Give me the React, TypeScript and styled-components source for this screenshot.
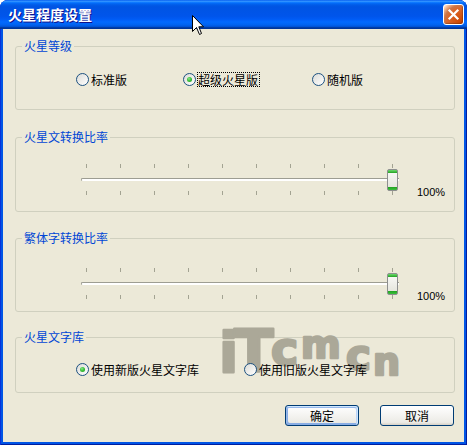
import React from "react";
import styled, { createGlobalStyle } from "styled-components";

const Global = createGlobalStyle`
  html, body { margin: 0; padding: 0; background: #ffffff; }
  body {
    font-family: "Noto Sans CJK SC", "Liberation Sans", sans-serif;
    font-size: 12px;
    color: #000;
  }
`;

const Window = styled.div`
  position: relative;
  width: 467px;
  height: 445px;
  display: flex;
  flex-direction: column;
  border-radius: 8px 8px 0 0;
  overflow: hidden;
  background: #0055e5;
  box-shadow: inset 1px 0 #0831d9, inset -1px 0 #001ea0, inset 0 -1px #001ea0;
`;

const TitleBar = styled.div`
  flex: none;
  height: 29px;
  box-sizing: border-box;
  display: flex;
  align-items: center;
  justify-content: space-between;
  padding: 0 3px 1px 8px;
  background: linear-gradient(
    180deg,
    #0058ee 0%,
    #3593ff 4%,
    #288eff 6%,
    #127dff 8%,
    #036ffc 10%,
    #0262ee 14%,
    #0057e5 20%,
    #0054e3 24%,
    #0055eb 56%,
    #005bf5 66%,
    #026afe 76%,
    #0062ef 86%,
    #0052d6 92%,
    #0040ab 94%,
    #003092 100%
  );
`;

const Title = styled.div`
  color: #fff;
  font-weight: bold;
  font-size: 14px;
  line-height: 16px;
  text-shadow: 1px 1px #0f1089;
`;

const CloseButton = styled.div`
  width: 21px;
  height: 21px;
  box-sizing: border-box;
  border: 1px solid #fff;
  border-radius: 3px;
  display: flex;
  align-items: center;
  justify-content: center;
  background: radial-gradient(
    circle at 90% 90%,
    #cc4600 0%,
    #dc6527 55%,
    #cd7546 70%,
    #ffccaa 90%,
    #ffffff 100%
  );
  box-shadow: inset -1px -1px 1px rgba(0, 0, 0, 0.25);
`;

const Body = styled.div`
  flex: 1;
  position: relative;
  display: flex;
  flex-direction: column;
  margin: 0 3px 3px;
  padding: 17px 9px 0 12px;
  background: #ece9d8;
`;

const Group = styled.div<{ $h: number; $pt: number; $mt: number }>`
  position: relative;
  box-sizing: border-box;
  height: ${(p) => p.$h}px;
  margin-top: ${(p) => p.$mt}px;
  padding-top: ${(p) => p.$pt}px;
  border: 1px solid #d0d0bf;
  border-radius: 3px;
`;

const Legend = styled.div`
  position: absolute;
  top: -9px;
  left: 6px;
  padding: 0 2px;
  line-height: 16px;
  color: #0046d5;
  background: #ece9d8;
`;

const RadioRow = styled.div<{ $cols: string }>`
  position: relative;
  z-index: 2;
  display: grid;
  grid-template-columns: ${(p) => p.$cols};
  align-items: center;
  padding-left: 60px;
`;

const RadioItem = styled.div`
  display: flex;
  align-items: center;
`;

const RadioCircle = styled.span<{ $checked?: boolean }>`
  position: relative;
  flex: none;
  width: 13px;
  height: 13px;
  box-sizing: border-box;
  border: 1px solid #1c5180;
  border-radius: 50%;
  background: linear-gradient(135deg, #dcdcd7 0%, #ffffff 100%);
  &::after {
    content: "";
    display: ${(p) => (p.$checked ? "block" : "none")};
    position: absolute;
    left: 3px;
    top: 3px;
    width: 5px;
    height: 5px;
    border-radius: 50%;
    background: radial-gradient(circle at 40% 35%, #8be88b 0%, #3cc23c 45%, #1a9a1a 100%);
  }
`;

const RadioLabel = styled.span<{ $focus?: boolean }>`
  line-height: 13px;
  margin-left: 1px;
  border: 1px dotted ${(p) => (p.$focus ? "#000" : "transparent")};
  padding: 0 1px 0 0;
  white-space: nowrap;
`;

const SliderRow = styled.div`
  display: flex;
  align-items: flex-end;
  padding-left: 65px;
`;

const SliderBox = styled.div`
  position: relative;
  width: 318px;
  display: flex;
  flex-direction: column;
`;

const TickRow = styled.div`
  display: flex;
  gap: 33px;
  height: 4px;
  padding-left: 5px;
`;

const Tick = styled.span`
  width: 1px;
  height: 4px;
  background: #a3a392;
`;

const Track = styled.div`
  height: 3px;
  margin: 10px 0;
  box-sizing: border-box;
  border-top: 1px solid #9d9d92;
  border-left: 1px solid #9d9d92;
  border-radius: 2px 0 0 2px;
  background: #ffffff;
`;

const Thumb = styled.div`
  position: absolute;
  top: 5px;
  width: 11px;
  height: 22px;
  box-sizing: border-box;
  border: 1px solid #8e8f8f;
  border-radius: 2px;
  background: linear-gradient(
    180deg,
    #6edb6e 0px,
    #21a121 3px,
    #f7f7f4 3px,
    #e6e6de calc(100% - 3px),
    #21a121 calc(100% - 3px),
    #3cc03c 100%
  );
`;

const Percent = styled.span`
  margin-left: 18px;
  margin-bottom: -3px;
  font-family: "Liberation Sans", "DejaVu Sans", sans-serif;
  font-size: 11px;
  line-height: 12px;
`;

const ButtonRow = styled.div`
  display: flex;
  justify-content: flex-end;
  gap: 21px;
  margin-top: 12px;
  padding-right: 1px;
`;

const Button = styled.button<{ $default?: boolean }>`
  width: 74px;
  height: 21px;
  box-sizing: border-box;
  padding: 0;
  border: 1px solid #003c74;
  border-radius: 3px;
  font-family: "Noto Sans CJK SC", sans-serif;
  font-size: 12px;
  line-height: 14px;
  color: #000;
  background: linear-gradient(180deg, #ffffff 0%, #ecebe6 86%, #d6d0c5 100%);
  box-shadow: ${(p) =>
    p.$default
      ? "inset -1px 1px #cee7ff, inset 1px 2px #98b8ea, inset -2px 2px #bcd4f6, inset 1px -1px #89ade4, inset 2px -2px #89ade4"
      : "none"};
`;

const Watermark = styled.svg`
  position: absolute;
  z-index: 1;
  left: 207px;
  top: 280px;
  overflow: visible;
  pointer-events: none;
`;

const Cursor = styled.svg`
  position: absolute;
  z-index: 5;
  left: 192px;
  top: 15px;
`;

function Radio({ label, checked, focus }: { label: string; checked?: boolean; focus?: boolean }) {
  return (
    <RadioItem>
      <RadioCircle $checked={checked} />
      <RadioLabel $focus={focus}>{label}</RadioLabel>
    </RadioItem>
  );
}

function Slider({ value }: { value: number }) {
  const ticks = Array.from({ length: 10 });
  const left = 5 + Math.round(value * 9 * 34) - 5;
  return (
    <SliderRow>
      <SliderBox>
        <TickRow>
          {ticks.map((_, i) => (
            <Tick key={i} />
          ))}
        </TickRow>
        <Track />
        <TickRow>
          {ticks.map((_, i) => (
            <Tick key={i} />
          ))}
        </TickRow>
        <Thumb style={{ left }} />
      </SliderBox>
      <Percent>{Math.round(value * 100)}%</Percent>
    </SliderRow>
  );
}

export default function App() {
  return (
    <>
      <Global />
      <Window>
        <TitleBar>
          <Title>火星程度设置</Title>
          <CloseButton>
            <svg width="13" height="13" viewBox="0 0 13 13">
              <path d="M2.5 2.5 L10.5 10.5 M10.5 2.5 L2.5 10.5" stroke="#fff" strokeWidth="2.2" strokeLinecap="square" />
            </svg>
          </CloseButton>
        </TitleBar>
        <Body>
          <Group $h={64} $pt={25} $mt={0}>
            <Legend>火星等级</Legend>
            <RadioRow $cols="107px 129px auto">
              <Radio label="标准版" />
              <Radio label="超级火星版" checked focus />
              <Radio label="随机版" />
            </RadioRow>
          </Group>
          <Group $h={75} $pt={26} $mt={27}>
            <Legend>火星文转换比率</Legend>
            <Slider value={1} />
          </Group>
          <Group $h={74} $pt={29} $mt={26}>
            <Legend>繁体字转换比率</Legend>
            <Slider value={1} />
          </Group>
          <Group $h={56} $pt={24} $mt={25}>
            <Legend>火星文字库</Legend>
            <RadioRow $cols="168px auto">
              <Radio label="使用新版火星文字库" checked />
              <Radio label="使用旧版火星文字库" />
            </RadioRow>
          </Group>
          <ButtonRow>
            <Button $default>确定</Button>
            <Button>取消</Button>
          </ButtonRow>
          <Watermark width="210" height="85" viewBox="0 0 210 85">
            <g
              fill="#aba898"
              stroke="#aba898"
              strokeWidth="2.5"
              strokeLinejoin="round"
              fontFamily="DejaVu Sans, sans-serif"
              fontWeight="bold"
            >
              <text x="9" y="63" fontSize="56">i</text>
              <text x="24" y="63" fontSize="58">T</text>
              <text x="61" y="56" fontSize="46">c</text>
              <text x="91" y="49" fontSize="38">m</text>
              <text x="136" y="61" fontSize="42">c</text>
              <text x="163" y="66" fontSize="38">n</text>
            </g>
          </Watermark>
        </Body>
        <Cursor width="13" height="22" viewBox="0 0 13 22">
          <path d="M0.5 0.5 L0.5 16.5 L4.5 12.5 L7.5 19.5 L9.5 18.5 L6.8 11.8 L11.5 11.8 Z" fill="#fff" stroke="#000" strokeWidth="1" strokeLinejoin="miter" />
        </Cursor>
      </Window>
    </>
  );
}
